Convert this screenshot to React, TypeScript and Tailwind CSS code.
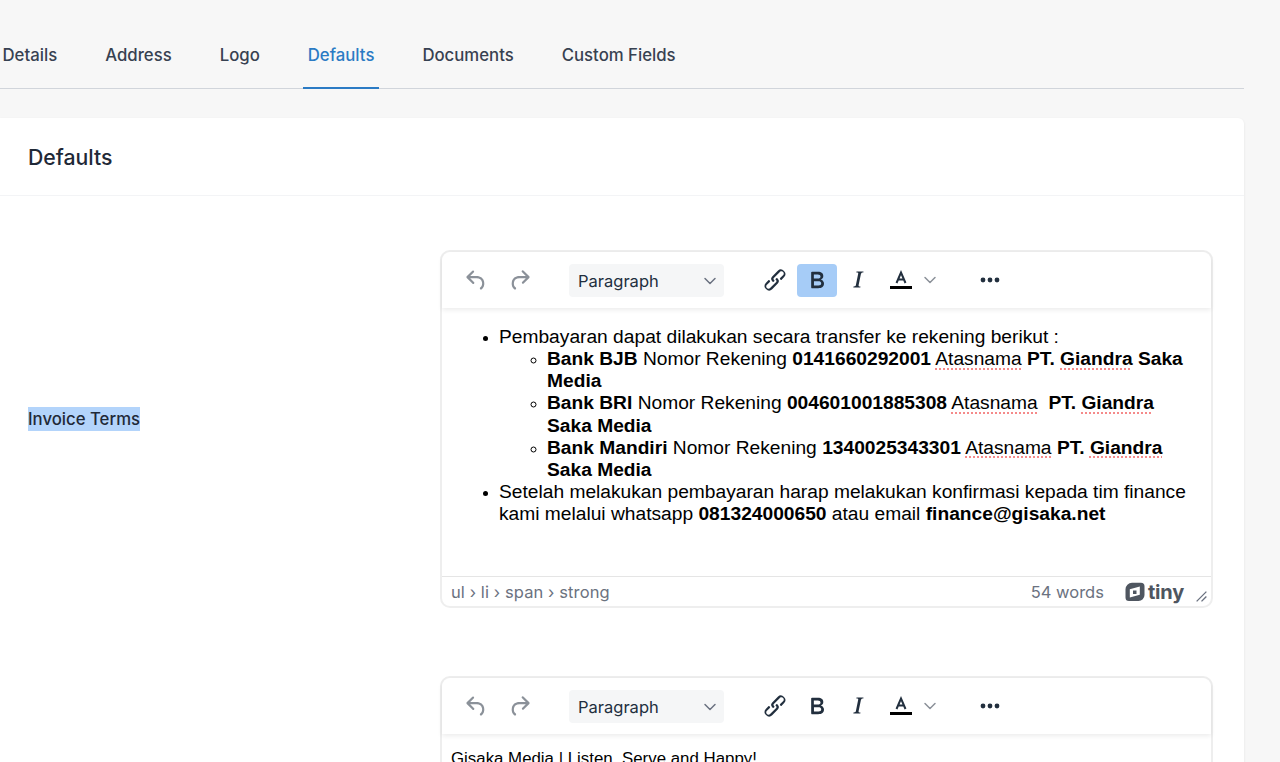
import { ChevronDown } from "lucide-react";

const SANS = "font-['Inter',sans-serif]";
const TABS = ["Details", "Address", "Logo", "Defaults", "Documents", "Custom Fields"];

function Spell({ children }: { children: string }) {
  return <span className="underline decoration-[#f58a8a] decoration-dotted decoration-2 underline-offset-[3px]">{children}</span>;
}

function Toolbar({ boldActive }: { boldActive?: boolean }) {
  return (
    <div className="relative z-10 flex h-[56px] items-center rounded-t-[9px] bg-white pl-[12px] shadow-[0_2px_5px_rgba(0,0,0,0.08)]">
      <div className="flex w-[44px] justify-center">
        <svg viewBox="0 0 24 24" className="h-[27px] w-[27px] fill-[#8b9199]">
          <path d="M6.4 8H12c3.7 0 6.2 2 6.8 5.1.6 2.7-.4 5.6-2.3 6.8a1 1 0 0 1-1-1.8c1.1-.7 1.8-2.7 1.4-4.6-.5-2.1-2.1-3.5-4.9-3.5H6.4l3.3 3.3a1 1 0 1 1-1.4 1.4l-5-5a1 1 0 0 1 0-1.4l5-5a1 1 0 0 1 1.4 1.4L6.4 8Z" />
        </svg>
      </div>
      <div className="flex w-[42px] justify-center">
        <svg viewBox="0 0 24 24" className="h-[27px] w-[27px] fill-[#8b9199]">
          <path d="M17.6 10H12c-2.8 0-4.4 1.4-4.9 3.5-.4 2 .3 3.9 1.4 4.6a1 1 0 1 1-1 1.8c-2-1.2-2.9-4.1-2.3-6.8.6-3 3-5.1 6.8-5.1h5.6l-3.3-3.3a1 1 0 1 1 1.4-1.4l5 5a1 1 0 0 1 0 1.4l-5 5a1 1 0 0 1-1.4-1.4l3.3-3.3Z" />
        </svg>
      </div>
      <div className="ml-[29px] flex h-[33px] w-[155px] items-center justify-between rounded-[4px] bg-[#f5f6f7] pl-[9px] pr-[4px] pt-[2px]">
        <span className="text-[16.5px] text-[#222f3e]">Paragraph</span>
        <ChevronDown className="h-[20px] w-[20px] text-[#6b7280]" strokeWidth={1.8} />
      </div>
      <div className="ml-[31px] flex w-[40px] justify-center">
        <svg viewBox="0 0 24 24" className="h-[28px] w-[28px] fill-[#222f3e]">
          <path d="M6.2 12.3a1 1 0 0 1 1.4 1.4l-2 2a2 2 0 1 0 2.6 2.8l4.8-4.8a1 1 0 0 0 0-1.4 1 1 0 1 1 1.4-1.3 2.9 2.9 0 0 1 0 4L9.6 20a3.9 3.9 0 0 1-5.5-5.5l2-2Zm11.6-.6a1 1 0 0 1-1.4-1.4l2-2a2 2 0 1 0-2.6-2.8L11 10.3a1 1 0 0 0 0 1.4A1 1 0 1 1 9.6 13a2.9 2.9 0 0 1 0-4L14.4 4a3.9 3.9 0 0 1 5.5 5.5l-2 2Z" />
        </svg>
      </div>
      <div className={boldActive ? "ml-[2px] flex h-[33px] w-[40px] items-center justify-center rounded-[4px] bg-[#a6ccf7]" : "ml-[2px] flex h-[33px] w-[40px] items-center justify-center"}>
        <svg viewBox="0 0 24 24" className="h-[28px] w-[28px] fill-[#222f3e]">
          <path d="M7.8 19c-.3 0-.5 0-.6-.2l-.2-.5V5.7c0-.2 0-.4.2-.5l.6-.2h5c1.5 0 2.7.3 3.5 1 .7.6 1.1 1.4 1.1 2.5a3 3 0 0 1-.6 1.9c-.4.6-1 1-1.6 1.2.4.1.9.3 1.3.6s.8.7 1 1.2c.4.4.5 1 .5 1.6 0 1.3-.4 2.3-1.3 3-.8.7-2.1 1-3.8 1H7.8Zm5-8.3c.6 0 1.2-.1 1.6-.5.4-.3.6-.7.6-1.3 0-1.1-.8-1.7-2.3-1.7H9.3v3.5h3.4Zm.5 6c.7 0 1.3-.1 1.7-.4.4-.4.6-.9.6-1.5s-.2-1-.7-1.4c-.4-.3-1-.4-2-.4H9.4v3.8h4Z" />
        </svg>
      </div>
      <div className="flex w-[42px] justify-center">
        <svg viewBox="0 0 24 24" className="h-[28px] w-[28px] fill-[#222f3e]">
          <path d="M16.7 4.7l-.1.9h-.3c-.6 0-1 .1-1.3.3-.2.2-.4.5-.5 1l-2 9.7c0 .3 0 .5.2.7.2.1.6.2 1.1.2h.3l-.1.9H8l.1-.9h.3c.6 0 1-.1 1.3-.3.2-.2.4-.5.5-1l2-9.7c0-.3 0-.5-.2-.7-.2-.1-.6-.2-1.1-.2h-.3l.1-.9h6Z" />
        </svg>
      </div>
      <svg viewBox="0 0 24 24" className="ml-[10px] h-[24px] w-[24px]">
        <path d="M7.5 15 12 4.500 16.500 15M9 11.500h6" fill="none" stroke="#222f3e" strokeWidth="2" />
        <rect x="1" y="18" width="22" height="3" fill="#000" />
      </svg>
      <ChevronDown className="ml-[7px] h-[20px] w-[20px] text-[#8b9199]" strokeWidth={1.8} />
      <svg viewBox="0 0 24 24" className="ml-[38px] h-[24px] w-[24px] fill-[#222f3e]">
        <circle cx="5" cy="12" r="2.4" />
        <circle cx="12" cy="12" r="2.4" />
        <circle cx="19" cy="12" r="2.4" />
      </svg>
    </div>
  );
}

function TinyLogo() {
  return (
    <div className="flex items-center gap-[3px]">
      <svg viewBox="0 0 20 20" className="h-[20px] w-[20px]">
        <path d="M7 .8h9A3.500 3.500 0 0 1 19.500 4.300V13a6 6 0 0 1-6 6H4A3.500 3.500 0 0 1 .5 15.500V7.300A6.500 6.500 0 0 1 7 .8Z" fill="#4f5660" />
        <path d="M4.800 7.300 14.800 4.600v8.200L4.800 15.500Z" fill="#fff" />
        <path d="M8 8.500h3.500V12H8Z" fill="#4f5660" />
      </svg>
      <span className="text-[20px] font-bold leading-none tracking-[-0.2px] text-[#4f5660]">tiny</span>
    </div>
  );
}

function InvoiceBody() {
  return (
    <ul className="list-disc pl-[48px] marker:text-[15px]">
      <li>
        Pembayaran dapat dilakukan secara transfer ke rekening berikut :
        <ul className="list-[circle] pl-[48px]">
          <li>
            <strong>Bank BJB</strong> Nomor Rekening <strong>0141660292001</strong> <Spell>Atasnama</Spell>{" "}
            <strong>PT. <Spell>Giandra</Spell> Saka Media</strong>
          </li>
          <li>
            <strong>Bank BRI</strong> Nomor Rekening <strong>004601001885308</strong> <Spell>Atasnama</Spell>&nbsp;{" "}
            <strong>PT. <Spell>Giandra</Spell> Saka Media</strong>
          </li>
          <li>
            <strong>Bank Mandiri</strong> Nomor Rekening <strong>1340025343301</strong> <Spell>Atasnama</Spell>{" "}
            <strong>PT. <Spell>Giandra</Spell> Saka Media</strong>
          </li>
        </ul>
      </li>
      <li>
        Setelah melakukan pembayaran harap melakukan konfirmasi kepada tim finance kami melalui whatsapp{" "}
        <strong>081324000650</strong> atau email <strong>finance@gisaka.net</strong>
      </li>
    </ul>
  );
}

export default function App() {
  return (
    <div className={`h-[762px] w-[1280px] overflow-hidden bg-[#f7f7f7] ${SANS}`}>
      <div className="w-[1244px]">
        <nav className="flex gap-[38px] border-b border-[#d1d5db]">
          {TABS.map((tab, i) => (
            <a
              key={tab}
              className={
                (i === 0 ? "-ml-[2.5px] " : "") +
                (tab === "Defaults"
                  ? "-mb-px border-b-2 border-[#2b7bc4] px-[5px] pb-[20px] pt-[43px] text-[16.75px] font-medium leading-[24px] text-[#2b7bc4]"
                  : "-mb-px border-b-2 border-transparent px-[5px] pb-[20px] pt-[43px] text-[16.75px] font-medium leading-[24px] text-[#374151]")
              }
            >
              {tab}
            </a>
          ))}
        </nav>

        <div className="mt-[29px] rounded-r-[6px] bg-white shadow-[0_1px_3px_rgba(0,0,0,0.08)]">
          <div className="flex h-[78px] items-center border-b border-[#f3f4f6] pl-[28px] pt-[2px]">
            <h2 className="text-[21.25px] font-medium text-[#1f2937]">Defaults</h2>
          </div>

          <div className="flex items-center pr-[31px] pt-[34px]">
            <div className="w-[440px] pl-[28px]">
              <span className="bg-[#b3d4fb] py-[2px] text-[16.75px] font-medium leading-[24px] text-[#1f2937]">Invoice Terms</span>
            </div>
            <div className="flex-1 pt-[20px]">
              <div className="relative rounded-[10px] border-2 border-[#eeeeee] bg-white">
                <Toolbar boldActive />
                <div className="h-[268px] pb-[17px] pl-[9px] pr-[10px] pt-[18px] font-['Liberation_Sans',sans-serif] text-[19.2px] leading-[22.14px] text-black">
                  <InvoiceBody />
                </div>
                <div className="flex h-[30px] items-center justify-between rounded-b-[9px] border-t border-[#e5e5e5] pl-[9px] pr-[27px] pt-[1px] text-[16.5px] text-[#6b7280]">
                  <span className="tracking-[0.1px]">ul › li › span › strong</span>
                  <div className="flex items-center gap-[21px]">
                    <span>54 words</span>
                    <TinyLogo />
                  </div>
                </div>
                <svg viewBox="0 0 12 12" className="absolute bottom-[3px] right-[3px] h-[13px] w-[13px] stroke-[#6b7280]">
                  <path d="M1.5 10.500 10.500 1.500M6 10.500 10.500 6" strokeWidth="1.3" />
                </svg>
              </div>
            </div>
          </div>

          <div className="mt-[68px] flex pr-[31px]">
            <div className="w-[440px]" />
            <div className="flex-1 rounded-[10px] border-2 border-[#eeeeee] bg-white">
              <Toolbar />
              <div className="px-[9px] pt-[14px] font-['Liberation_Sans',sans-serif] text-[16.85px] leading-[22px] text-black">
                Gisaka Media | Listen, Serve and Happy!
              </div>
            </div>
          </div>
        </div>
      </div>
    </div>
  );
}
